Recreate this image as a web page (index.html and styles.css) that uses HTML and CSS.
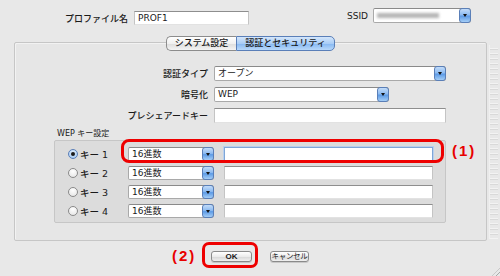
FILE: index.html
```html
<!DOCTYPE html>
<html lang="ja">
<head>
	<meta charset="UTF-8">
	<title>プロファイル設定</title>
	<link rel="stylesheet" href="styles.css">
</head>
<body>
	<div class="top">
		<span class="lbl lbl-name">プロファイル名</span>
		<div class="field f-name">PROF1</div>
		<span class="lbl lbl-ssid">SSID</span>
		<div class="popup p-ssid"><span class="blur"></span><span class="arrow"></span></div>
	</div>

	<div class="main">
		<div class="panel">
			<div class="tabs">
				<span class="tab">システム設定</span>
				<span class="tab on">認証とセキュリティ</span>
			</div>

			<div class="form">
				<span class="lbl">認証タイプ</span>
				<div class="popup p-wide">オープン<span class="arrow"></span></div>
				<span class="lbl">暗号化</span>
				<div class="popup p-mid">WEP<span class="arrow"></span></div>
				<span class="lbl">プレシェアードキー</span>
				<div class="field f-wide"></div>
			</div>

			<div class="wep-title">WEP キー設定</div>
			<div class="group">
				<div class="key">
					<span class="radio on"></span><span class="key-name">キー 1</span>
					<div class="popup p-key">16進数<span class="arrow"></span></div>
					<div class="field f-key focus"></div>
				</div>
				<div class="key">
					<span class="radio"></span><span class="key-name">キー 2</span>
					<div class="popup p-key">16進数<span class="arrow"></span></div>
					<div class="field f-key"></div>
				</div>
				<div class="key">
					<span class="radio"></span><span class="key-name">キー 3</span>
					<div class="popup p-key">16進数<span class="arrow"></span></div>
					<div class="field f-key"></div>
				</div>
				<div class="key">
					<span class="radio"></span><span class="key-name">キー 4</span>
					<div class="popup p-key">16進数<span class="arrow"></span></div>
					<div class="field f-key"></div>
				</div>
				<!-- 注釈 (1) -->
				<div class="mark mark1"></div>
				<span class="note note1">(1)</span>
			</div>
		</div>
		<div class="ruler"></div>
	</div>

	<div class="buttons">
		<span class="note">(2)</span>
		<div class="mark2"><span class="btn btn-ok">OK</span></div>
		<span class="btn btn-cancel">キャンセル</span>
	</div>
	<div class="grip"></div>
</body>
</html>
```

FILE: styles.css
```css
* {
	margin: 0;
	padding: 0;
	box-sizing: border-box;
}
html, body {
	width: 500px;
	height: 276px;
	overflow: hidden;
}
body {
	background: #e8e8e8;
	font-family: "DejaVu Sans", "Noto Sans CJK JP", sans-serif;
	font-size: 9px;
	color: #1a1a1a;
	position: relative;
}
.lbl {
	text-align: right;
	white-space: nowrap;
	font-weight: 500;
}

/* 上の行 */
.top {
	display: flex;
	align-items: flex-start;
	padding-top: 8px;
	height: 25px;
}
.lbl-name {
	width: 128px;
	margin-top: 4px;
}
.f-name {
	width: 115px;
	margin-left: 6px;
	margin-top: 3px;
}
.lbl-ssid {
	width: 119px;
	margin-top: 3px;
}
.p-ssid {
	width: 98px;
	margin-left: 5px;
}
.blur {
	display: block;
	width: 62px;
	height: 5px;
	margin-top: 4px;
	background: #b4b4b4;
	filter: blur(1.4px);
}

/* 入力欄 */
.field {
	height: 14px;
	background: #fff;
	border: 1px solid #c4c4c4;
	border-top-color: #8e8e8e;
	border-bottom-color: #e2e2e2;
	padding: 0 3px;
	line-height: 12px;
}
.field.focus {
	border: 1px solid #7ea6d8;
	box-shadow: 0 0 0 1px #b9d0ee;
}

/* ポップアップ */
.popup {
	position: relative;
	height: 15px;
	background: #fff;
	border: 1px solid #a9a9a9;
	border-top-color: #8a8a8a;
	border-radius: 2px 3px 3px 2px;
	padding: 0 16px 0 3px;
	line-height: 13px;
	white-space: nowrap;
}
.arrow {
	position: absolute;
	right: -1px;
	top: -1px;
	width: 12px;
	height: 15px;
	border: 1px solid #5a7fb8;
	border-radius: 3px;
	background: linear-gradient(#c3dcf9, #8dbbf1 45%, #5d9be6 55%, #a4cdf6);
}
.arrow::after {
	content: "";
	position: absolute;
	left: 3px;
	top: 5px;
	border-left: 2px solid transparent;
	border-right: 2px solid transparent;
	border-top: 3px solid #111;
}

/* タブパネル */
.main {
	display: flex;
	margin-top: 17px;
	margin-left: 14px;
}
.panel {
	width: 473px;
	height: 199px;
	border: 1px solid #c6c6c6;
	border-radius: 2px;
	background: #e6e6e6;
	box-shadow: inset 1px 1px 0 #f2f2f2;
	padding-bottom: 17px;
}
.tabs {
	display: flex;
	justify-content: center;
	margin-top: -7px;
	height: 15px;
}
.tab {
	height: 15px;
	line-height: 13px;
	border: 1px solid #8c8c8c;
	background: linear-gradient(#ffffff, #f0f0f0 50%, #dcdcdc 51%, #f4f4f4);
	padding: 0 5px;
	text-align: center;
	width: 70px;
	border-radius: 5px 0 0 5px;
	border-right: none;
	font-weight: 500;
}
.tab.on {
	width: 99px;
	border: 1px solid #5a7fb8;
	border-radius: 0 5px 5px 0;
	background: linear-gradient(#d4e6fb, #a9cdf6 50%, #85b7f1 51%, #b8d8fa);
}

.form {
	display: grid;
	grid-template-columns: 193px auto;
	column-gap: 6px;
	row-gap: 6px;
	justify-items: start;
	align-items: center;
	margin-top: 15px;
}
.form .lbl {
	justify-self: end;
}
.p-wide {
	width: 232px;
}
.p-mid {
	width: 175px;
}
.f-wide {
	width: 232px;
	height: 15px;
}

.wep-title {
	font-size: 8px;
	margin: 6px 0 1px 42px;
	height: 10px;
	line-height: 10px;
}
.group {
	position: relative;
	width: 392px;
	margin-left: 39px;
	background: #dcdcdc;
	border: 1px solid #c6c6c6;
	border-radius: 2px;
	padding: 6px 0 4px 13px;
	display: flex;
	flex-direction: column;
	gap: 5px;
}
.key {
	display: flex;
	align-items: center;
	height: 14px;
}
.radio {
	width: 10px;
	height: 10px;
	border-radius: 50%;
	border: 1px solid #8a8a8a;
	background: radial-gradient(circle at 50% 30%, #ffffff, #e2e2e2);
	position: relative;
}
.radio.on {
	border-color: #5a7fb8;
	background: radial-gradient(circle at 50% 30%, #e0eefc, #9cc4f2);
}
.radio.on::after {
	content: "";
	position: absolute;
	left: 2px;
	top: 2px;
	width: 4px;
	height: 4px;
	border-radius: 50%;
	background: #1a1a1a;
}
.key-name {
	width: 48px;
	margin-left: 2px;
	font-size: 9.5px;
	font-weight: 500;
}
.p-key {
	width: 86px;
	height: 14px;
	line-height: 12px;
}
.p-key .arrow {
	height: 14px;
}
.f-key {
	width: 209px;
	margin-left: 10px;
}

/* 注釈 */
.mark {
	position: absolute;
	left: 66px;
	top: -2px;
	width: 323px;
	height: 24px;
	border: 3px solid #ee0000;
	border-radius: 8px;
}
.note {
	font-family: "Liberation Sans", "Noto Sans CJK JP", sans-serif;
	font-weight: bold;
	font-size: 15px;
	color: #e80000;
	letter-spacing: 2px;
}
.note1 {
	position: absolute;
	left: 397px;
	top: 1px;
}

.ruler {
	width: 9px;
	height: 194px;
	margin: 3px 0 0 2px;
	border-left: 1px solid #f2f2f2;
	background: repeating-linear-gradient(#e8e8e8 0, #e8e8e8 3px, #f6f6f6 3px, #f6f6f6 4px, #d6d6d6 4px, #d6d6d6 5px);
	opacity: 0.8;
}

/* ボタン */
.buttons {
	display: flex;
	align-items: center;
	margin-top: 1px;
	padding-left: 172px;
}
.buttons .note {
	width: 25px;
	margin-right: 5px;
}
.mark2 {
	width: 56px;
	height: 26px;
	border: 3px solid #ee0000;
	border-radius: 7px;
	padding: 6px 0 0 6px;
}
.btn {
	display: block;
	height: 11px;
	line-height: 9px;
	font-size: 8px;
	text-align: center;
	border: 1px solid #8a8a8a;
	border-radius: 3px;
	background: linear-gradient(#ffffff, #ececec 50%, #d6d6d6 51%, #f0f0f0);
	box-shadow: 0 1px 0 #c8c8c8;
}
.btn-ok {
	width: 41px;
	font-weight: bold;
	font-family: "Liberation Sans", sans-serif;
}
.btn-cancel {
	width: 39px;
	margin-left: 12px;
	margin-top: 2px;
	font-size: 7.5px;
	letter-spacing: -0.3px;
}
.grip {
	position: absolute;
	right: 0;
	bottom: 0;
	width: 8px;
	height: 8px;
	background: repeating-linear-gradient(135deg, transparent 0, transparent 2px, #a8a8a8 2px, #a8a8a8 3px);
	clip-path: polygon(100% 0, 100% 100%, 0 100%);
}
```
